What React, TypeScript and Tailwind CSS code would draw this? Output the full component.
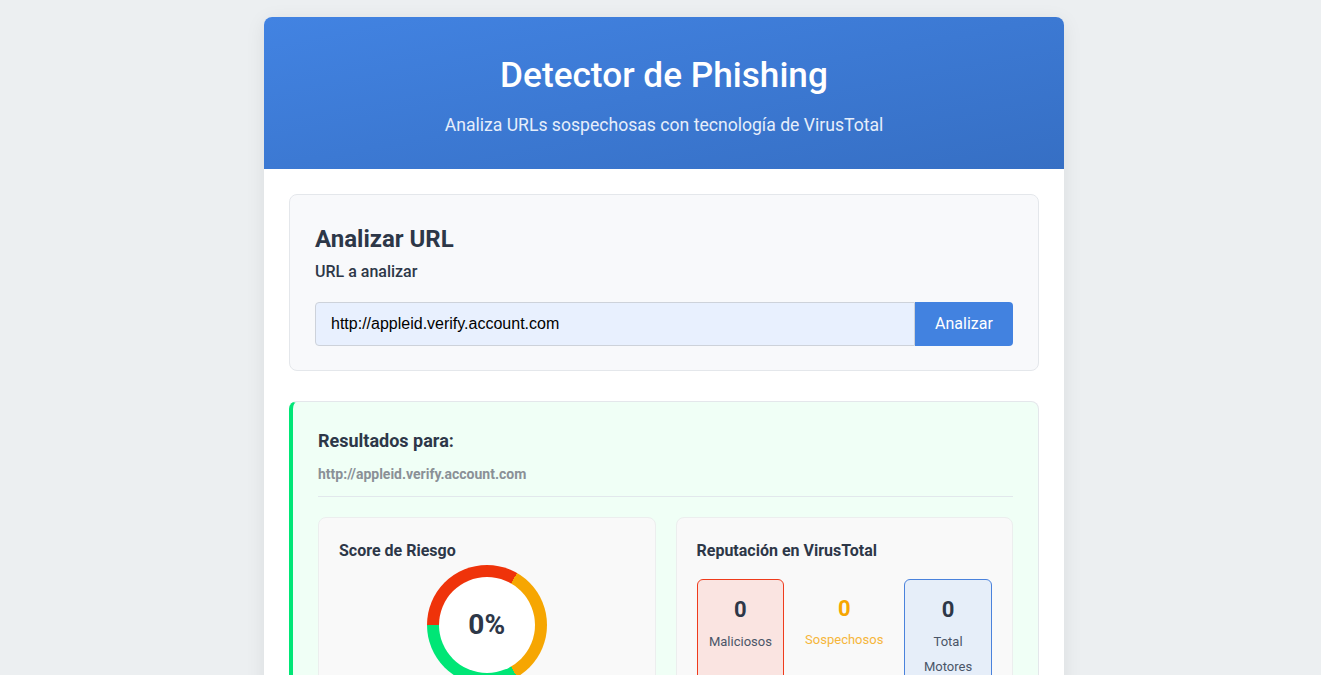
export default function App() {
  return (
    <div className="min-h-screen bg-[#eceff1] pl-[7px] pt-[17px] font-['Roboto',sans-serif] text-[#2d3748]">
      <div className="mx-auto w-[800px] overflow-hidden rounded-lg bg-white shadow-[0_4px_20px_rgba(0,0,0,0.08)]">
        <header className="flex h-[152px] flex-col items-center bg-gradient-to-br from-[#4283e2] to-[#366fc4] pt-[36px] text-white">
          <h1 className="text-[35.2px] font-medium leading-[44px]">Detector de Phishing</h1>
          <p className="mt-[17px] text-[17.6px] leading-[22px] text-[#e6eefb]">
            Analiza URLs sospechosas con tecnología de VirusTotal
          </p>
        </header>

        <main className="flex flex-col gap-[30px] p-[25px]">
          <section className="rounded-lg border border-[#e4e7eb] bg-[#f8f9fb] px-[25px] pb-[24px] pt-[29px]">
            <h2 className="text-[24px] font-bold leading-[30px]">Analizar URL</h2>
            <label className="mt-[8px] block text-[16px] font-medium leading-[20px]">URL a analizar</label>
            <div className="mt-[20px] flex h-[44px]">
              <input
                defaultValue="http://appleid.verify.account.com"
                className="min-w-0 flex-1 rounded-l border border-[#cdd2da] bg-[#e8f0fe] px-[15px] font-['Liberation_Sans',Arial,sans-serif] text-[16px] text-black outline-none"
              />
              <button className="w-[98px] rounded-r bg-[#4282e0] text-[16px] text-white">Analizar</button>
            </div>
          </section>

          <section className="rounded-lg border border-l-4 border-[#e4e7eb] border-l-[#00e676] bg-[#f0fff6] px-[25px] pt-[28px]">
            <h3 className="text-[18px] font-bold leading-[22px]">Resultados para:</h3>
            <p className="mt-[12px] text-[14px] font-bold leading-[20px] text-[#8a9096]">
              http://appleid.verify.account.com
            </p>
            <div className="mt-[12px] border-t border-[#e2e8ec]" />
            <div className="mt-[20px] grid grid-cols-2 gap-[20px]">
              <div className="h-[200px] rounded-lg border border-[#eceeee] bg-[#f9f9f9] px-[20px] pt-[23px]">
                <h4 className="text-[16px] font-bold leading-[20px]">Score de Riesgo</h4>
                <div className="mt-[4px] flex justify-center">
                  <div className="flex h-[120px] w-[120px] items-center justify-center rounded-full bg-[conic-gradient(from_150deg,#00e676_0deg_120deg,#ef330a_120deg_240deg,#f6a602_240deg_360deg)]">
                    <div className="flex h-[96px] w-[96px] items-center justify-center rounded-full bg-white">
                      <span className="text-[28px] font-bold">0%</span>
                    </div>
                  </div>
                </div>
              </div>

              <div className="h-[200px] rounded-lg border border-[#eceeee] bg-[#f9f9f9] px-[20px] pt-[23px]">
                <h4 className="text-[16px] font-bold leading-[20px]">Reputación en VirusTotal</h4>
                <div className="mt-[18px] grid grid-cols-3 gap-[16px] text-center">
                  <div className="h-[110px] rounded-md border border-[#ef3b1c] bg-[#fae4e1] px-[10px] pt-[15px]">
                    <div className="text-[22px] font-bold leading-[30px]">0</div>
                    <div className="mt-[4px] text-[13px] leading-[25px] text-[#4a5568]">Maliciosos</div>
                  </div>
                  <div className="pt-[15px]">
                    <div className="text-[22px] font-bold leading-[30px] text-[#f6a602]">0</div>
                    <div className="mt-[3px] text-[13px] leading-[25px] text-[#f6b63a]">Sospechosos</div>
                  </div>
                  <div className="h-[110px] rounded-md border border-[#4a82dc] bg-[#e6eef9] px-[10px] pt-[15px]">
                    <div className="text-[22px] font-bold leading-[30px]">0</div>
                    <div className="mt-[4px] text-[13px] leading-[25px] text-[#4a5568]">Total Motores</div>
                  </div>
                </div>
              </div>
            </div>
            <div className="h-[25px]" />
          </section>
        </main>
      </div>
    </div>
  )
}
